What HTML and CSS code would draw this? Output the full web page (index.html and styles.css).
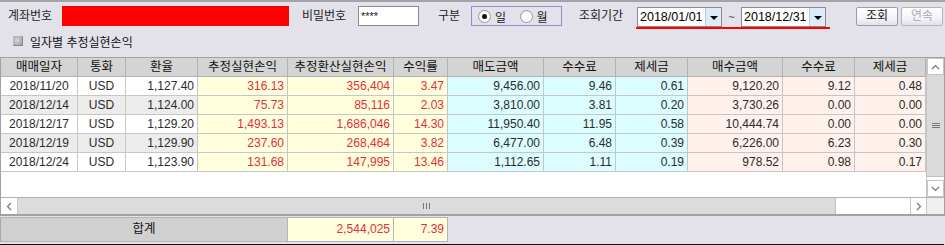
FILE: index.html
```html
<!DOCTYPE html>
<html lang="ko">
<head>
<meta charset="utf-8">
<link rel="stylesheet" href="styles.css">
</head>
<body>
<div class="topline"></div>
<div class="row1">
  <span class="lbl lbl-acct">계좌번호</span>
  <span class="acct"></span>
  <span class="lbl lbl-pw">비밀번호</span>
  <span class="pw">****</span>
  <span class="lbl lbl-kind">구분</span>
  <span class="radios">
    <span class="radio on"></span><span class="rlbl">일</span>
    <span class="radio"></span><span class="rlbl">월</span>
  </span>
  <span class="lbl lbl-period">조회기간</span>
  <span class="dates">
    <span class="date"><span class="dtext">2018/01/01</span><span class="dbtn"><span class="tri"></span></span></span>
    <span class="tilde">~</span>
    <span class="date"><span class="dtext">2018/12/31</span><span class="dbtn"><span class="tri"></span></span></span>
  </span>
  <span class="btn">조회</span>
  <span class="btn dis">연속</span>
</div>
<div class="row2">
  <span class="chk"></span>
  <span class="chklbl">일자별 추정실현손익</span>
</div>
<div class="grid">
  <div class="main">
    <div class="table">
      <div class="r hd">
        <div>매매일자</div><div>통화</div><div>환율</div><div>추정실현손익</div><div>추정환산실현손익</div><div>수익률</div><div>매도금액</div><div>수수료</div><div>제세금</div><div>매수금액</div><div>수수료</div><div>제세금</div>
      </div>
      <div class="r">
        <div class="c">2018/11/20</div><div class="c">USD</div><div>1,127.40</div><div class="y red">316.13</div><div class="y red">356,404</div><div class="y red">3.47</div><div class="b">9,456.00</div><div class="b">9.46</div><div class="b">0.61</div><div class="p">9,120.20</div><div class="p">9.12</div><div class="p">0.48</div>
      </div>
      <div class="r alt">
        <div class="c">2018/12/14</div><div class="c">USD</div><div>1,124.00</div><div class="y red">75.73</div><div class="y red">85,116</div><div class="y red">2.03</div><div class="b">3,810.00</div><div class="b">3.81</div><div class="b">0.20</div><div class="p">3,730.26</div><div class="p">0.00</div><div class="p">0.00</div>
      </div>
      <div class="r">
        <div class="c">2018/12/17</div><div class="c">USD</div><div>1,129.20</div><div class="y red">1,493.13</div><div class="y red">1,686,046</div><div class="y red">14.30</div><div class="b">11,950.40</div><div class="b">11.95</div><div class="b">0.58</div><div class="p">10,444.74</div><div class="p">0.00</div><div class="p">0.00</div>
      </div>
      <div class="r alt">
        <div class="c">2018/12/19</div><div class="c">USD</div><div>1,129.90</div><div class="y red">237.60</div><div class="y red">268,464</div><div class="y red">3.82</div><div class="b">6,477.00</div><div class="b">6.48</div><div class="b">0.39</div><div class="p">6,226.00</div><div class="p">6.23</div><div class="p">0.30</div>
      </div>
      <div class="r">
        <div class="c">2018/12/24</div><div class="c">USD</div><div>1,123.90</div><div class="y red">131.68</div><div class="y red">147,995</div><div class="y red">13.46</div><div class="b">1,112.65</div><div class="b">1.11</div><div class="b">0.19</div><div class="p">978.52</div><div class="p">0.98</div><div class="p">0.17</div>
      </div>
    </div>
    <div class="vscroll">
      <div class="arrow"><svg width="9" height="6" viewBox="0 0 9 6"><path d="M1 5 L4.5 1.5 L8 5" fill="none" stroke="#777" stroke-width="1.2"/></svg></div>
      <div class="vthumb"><span class="grip-h"></span></div>
      <div class="vtrack"></div>
      <div class="arrow"><svg width="9" height="6" viewBox="0 0 9 6"><path d="M1 1 L4.5 4.5 L8 1" fill="none" stroke="#777" stroke-width="1.2"/></svg></div>
    </div>
  </div>
  <div class="hscroll">
    <div class="harrow"><svg width="6" height="9" viewBox="0 0 6 9"><path d="M5 1 L1.5 4.5 L5 8" fill="none" stroke="#777" stroke-width="1.2"/></svg></div>
    <div class="hthumb"><span class="grip-v"></span></div>
    <div class="htrack"></div>
    <div class="harrow"><svg width="6" height="9" viewBox="0 0 6 9"><path d="M1 1 L4.5 4.5 L1 8" fill="none" stroke="#777" stroke-width="1.2"/></svg></div>
    <div class="corner"></div>
  </div>
</div>
<div class="footer">
  <div class="ftot">합계</div>
  <div class="fy red w106">2,544,025</div>
  <div class="fy red w54">7.39</div>
</div>
<div class="bottomline"></div>
</body>
</html>
```
FILE: styles.css
```css
* { box-sizing: border-box; }
html, body { margin: 0; padding: 0; }
body {
  width: 945px;
  height: 245px;
  overflow: hidden;
  background: #e3e2ea;
  font-family: "Liberation Sans", "Noto Sans CJK KR", sans-serif;
  font-size: 12px;
  color: #222;
}
.topline { height: 2px; background: #a4a4a8; }

.row1 {
  display: flex;
  align-items: center;
  height: 20px;
  margin-top: 4px;
  position: relative;
}
.lbl { line-height: 20px; white-space: nowrap; }
.lbl-acct { margin-left: 8px; width: 54px; }
.acct { width: 227px; height: 20px; background: #ff0000; }
.lbl-pw { margin-left: 13px; width: 56px; }
.pw {
  width: 61px; height: 20px; background: #fff;
  border: 1px solid #8a8a8a;
  font-size: 11px; line-height: 18px; padding-left: 2px;
  letter-spacing: 0px;
}
.lbl-kind { margin-left: 19px; width: 33px; }
.radios {
  display: flex; align-items: center;
  width: 91px; height: 20px;
  border: 1px solid #9d88c6;
  padding-left: 6px;
}
.radio {
  width: 13px; height: 13px; border-radius: 50%;
  border: 1px solid #9a9a9a;
  background: radial-gradient(circle at 60% 60%, #fff 40%, #e4e4e4 100%);
  position: relative;
  flex: none;
}
.radio.on::after {
  content: ""; position: absolute; left: 3px; top: 3px;
  width: 5px; height: 5px; border-radius: 50%; background: #111;
}
.rlbl { margin-left: 4px; width: 25px; }
.lbl-period { margin-left: 17px; width: 57px; }
.dates {
  display: flex; align-items: center;
  height: 23px;
  align-self: flex-start;
  border-bottom: 2px solid #f00;
  padding-left: 1px; padding-right: 4px;
}
.date {
  display: flex; width: 85px; height: 20px;
  border: 1px solid #8a8a8a; background: #fff;
}
.dtext {
  flex: 1; padding-left: 2px; line-height: 18px; font-size: 12.5px; color: #000;
}
.dbtn {
  width: 16px; height: 18px; background: #dcedf9;
  border-left: 1px solid #b8c8d8;
  display: flex; align-items: center; justify-content: center;
}
.tri {
  width: 0; height: 0;
  border-left: 4px solid transparent; border-right: 4px solid transparent;
  border-top: 4px solid #000;
  margin-top: 2px;
}
.tilde { width: 19px; text-align: center; font-size: 11px; color: #444; }
.btn {
  margin-left: 26px;
  width: 42px; height: 19px;
  align-self: flex-start; margin-top: 1px;
  border: 1px solid #9b9baa; border-radius: 2px;
  background: linear-gradient(#ffffff, #f4f4f8 60%, #e0e0ea);
  text-align: center; line-height: 17px; color: #111;
}
.btn.dis { margin-left: 3px; color: #a9a9b0; border-color: #b4b4c0; }

.row2 {
  display: flex; align-items: center;
  height: 20px; margin-top: 5px;
}
.chk {
  width: 10px; height: 10px; margin-left: 13px;
  background: radial-gradient(circle at 40% 40%, #d8d8d8, #9a9a9a);
  border: 1px solid #b8b8b8;
  border-right-color: #888; border-bottom-color: #888;
}
.chklbl { margin-left: 7px; color: #111; }

.grid {
  margin-top: 6px;
  width: 945px;
  border: 1px solid #a2a2a2;
  border-bottom-width: 2px;
  background: #fff;
}
.main { display: flex; height: 139px; }
.table { width: 925px; }
.r {
  display: grid;
  grid-template-columns: 77px 48px 72px 90px 106px 54px 96px 72px 72px 95px 72px 71px;
}
.r > div {
  height: 19px;
  border-right: 1px solid #c6c6c6;
  border-bottom: 1px solid #c6c6c6;
  line-height: 18px;
  padding-right: 3px;
  text-align: right;
  white-space: nowrap;
  color: #2b2b2b;
  background: #fff;
}
.r.alt > div { background: #ececec; }
.r > div.c { text-align: center; padding-right: 0; }
.r > div.y, .r.alt > div.y { background: #ffffde; }
.r > div.b, .r.alt > div.b { background: #dbfdff; }
.r > div.p, .r.alt > div.p { background: #fff2ed; }
.red { color: #e0303c !important; }
.r.hd > div {
  background: #d4d4d4;
  text-align: center;
  padding-right: 0;
  color: #111;
  border-right: 1px solid #b2b2b2;
  border-bottom: 1px solid #b2b2b2;
  font-size: 12.5px;
}

.vscroll {
  width: 18px;
  display: flex; flex-direction: column;
  border-left: 1px solid #c4c4c4;
  background: #fff;
}
.arrow {
  height: 17px; display: flex; align-items: center; justify-content: center;
  border: 1px solid #c6c6c6; background: #fff;
}
.vthumb {
  height: 102px; background: #dadada;
  border-bottom: 1px solid #c0c0c0;
  display: flex; align-items: center; justify-content: center;
}
.grip-h {
  width: 8px; height: 5px;
  border-top: 1px solid #777; border-bottom: 1px solid #777;
  position: relative;
}
.grip-h::after {
  content: ""; position: absolute; left: 0; right: 0; top: 1px;
  border-top: 1px solid #777;
}
.vtrack { flex: 1; background: #fff; }

.hscroll {
  display: flex; height: 17px;
  border-top: 1px solid #b0b0b0;
}
.harrow {
  width: 17px; display: flex; align-items: center; justify-content: center;
  background: #fff; border-right: 1px solid #c6c6c6;
}
.hthumb {
  width: 818px; background: #dcdcdc;
  display: flex; align-items: center; justify-content: center;
  border-right: 1px solid #c0c0c0;
}
.grip-v {
  width: 7px; height: 6px;
  border-left: 1px solid #777; border-right: 1px solid #777;
  position: relative;
}
.grip-v::after {
  content: ""; position: absolute; top: 0; bottom: 0; left: 2px;
  border-left: 1px solid #777;
}
.htrack { width: 74px; background: #fff; }
.harrow:nth-of-type(4) { border-left: 1px solid #c6c6c6; }
.corner { flex: 1; background: #efefef; }

.footer {
  display: flex; height: 25px; margin-top: 1px;
}
.footer > div {
  height: 25px; line-height: 23px;
  border: 1px solid #b4b4b4; border-left: none;
}
.ftot {
  width: 288px; background: #d0d0d0; text-align: center; color: #111;
  border-left: 1px solid #a8a8a8 !important;
  font-size: 12.5px;
}
.fy { background: #ffffde; text-align: right; padding-right: 3px; }
.w106 { width: 106px; }
.w54 { width: 54px; }
.bottomline {
  margin-top: 2px; width: 944px; height: 1px; background: #111;
}
```
